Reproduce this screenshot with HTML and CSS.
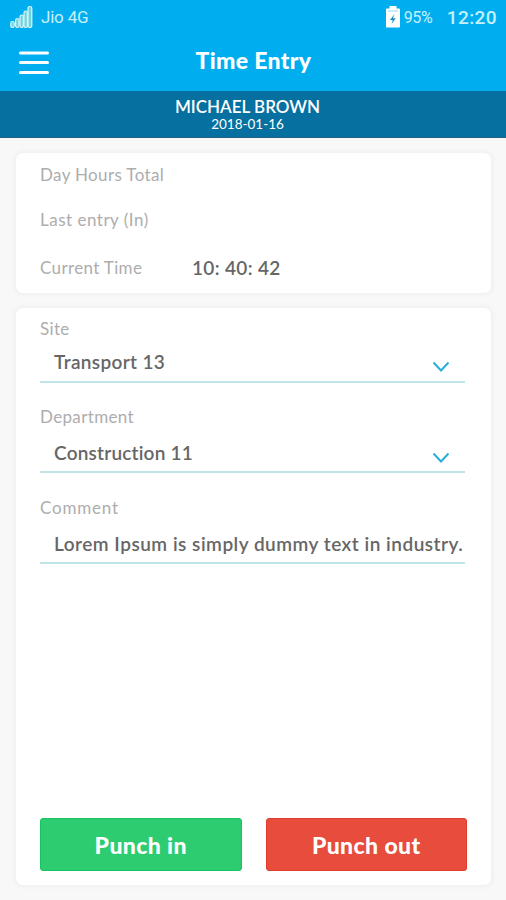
FILE: index.html
```html
<!DOCTYPE html>
<html lang="en">
<head>
<meta charset="utf-8">
<title>Time Entry</title>
<link rel="stylesheet" href="styles.css">
</head>
<body>
<div class="status">
  <svg class="signal" width="23" height="24" viewBox="0 0 23 24"><g fill="#6fd3dd" stroke="#d8f6fa" stroke-width="1.2"><rect x=".8" y="16.500" width="3.400" height="6" rx="1.700"/><rect x="5.600" y="13.500" width="3.400" height="9" rx="1.700"/><rect x="10" y="10" width="3.400" height="12.500" rx="1.700"/><rect x="14" y="6" width="3.400" height="16.500" rx="1.700"/><rect x="18" y="1.500" width="3.800" height="21" rx="1.700"/></g></svg>
  <span class="carrier">Jio 4G</span>
  <svg class="battery" width="16" height="24" viewBox="0 0 16 24"><path fill="#fff" d="M4.500 1h7v2.500H14q1 0 1 1v17q0 1-1 1H2q-1 0-1-1v-17q0-1 1-1h2.500z"/><path d="M3 6h10" stroke="#8bdcf7" stroke-width="1"/><path fill="#168fbe" d="M9.500 9 5 15h2.700L6.700 19l4-5.800H8z"/></svg>
  <span class="percent">95%</span>
  <span class="clock">12:20</span>
</div>
<header class="bar">
  <svg class="menu" width="32" height="26" viewBox="0 0 32 26"><path d="M2.500 3h27M2.500 12.500h27M2.500 22.500h27" stroke="#fff" stroke-width="3" stroke-linecap="round"/></svg>
  <h1 class="title">Time Entry</h1>
</header>
<div class="person">
  <div class="name">MICHAEL BROWN</div>
  <div class="date">2018-01-16</div>
</div>
<main class="content">
  <section class="card summary">
    <div class="row"><span class="label l-day">Day Hours Total</span></div>
    <div class="row"><span class="label l-last">Last entry (In)</span></div>
    <div class="row"><span class="label l-now">Current Time</span><span class="value time">10: 40: 42</span></div>
  </section>
  <section class="card form">
    <div class="field site">
      <div class="label">Site</div>
      <div class="input"><span class="value">Transport 13</span><svg class="chevron" width="18" height="12" viewBox="0 0 18 12"><path d="m1.500 1.500 7.500 8 7.500-8" fill="none" stroke="#27aed8" stroke-width="2"/></svg></div>
    </div>
    <div class="field">
      <div class="label">Department</div>
      <div class="input"><span class="value v-dept">Construction 11</span><svg class="chevron" width="18" height="12" viewBox="0 0 18 12"><path d="m1.500 1.500 7.500 8 7.500-8" fill="none" stroke="#27aed8" stroke-width="2"/></svg></div>
    </div>
    <div class="field">
      <div class="label l-comment">Comment</div>
      <div class="input"><span class="value v-comment">Lorem Ipsum is simply dummy text in industry.</span></div>
    </div>
    <div class="actions">
      <button class="button in">Punch in</button>
      <button class="button out">Punch out</button>
    </div>
  </section>
</main>
</body>
</html>
```
FILE: styles.css
```css
* { box-sizing: border-box; }
body {
  margin: 0;
  height: 900px;
  display: flex;
  flex-direction: column;
  background: #f8f8f8;
  font-family: Lato, "Liberation Sans", sans-serif;
}
.status {
  height: 36px;
  padding: 5px 9px 0 10px;
  display: flex;
  background: #00aeef;
  color: #c5f1fc;
  font-family: Roboto, sans-serif;
  line-height: 25px;
}
.carrier { margin-left: 8px; font-size: 17px; letter-spacing: -.2px; }
.battery { margin-left: auto; }
.percent { width: 30px; margin-left: 3px; font-size: 16px; letter-spacing: -.4px; }
.clock { margin-left: 13px; font-size: 19px; font-weight: 500; letter-spacing: .4px; }
.bar {
  height: 55px;
  padding: 14px 18px 0;
  display: grid;
  grid-template-columns: 32px 1fr 32px;
  background: #00aeef;
}
.title {
  margin: -4px 0 0;
  padding-left: 1px;
  color: #fff;
  text-align: center;
  font-size: 23px;
  line-height: 28px;
  font-weight: 900;
  letter-spacing: .35px;
}
.person {
  height: 47px;
  padding: 6px 11px 0 0;
  text-align: center;
  color: #fff;
  background: #0671a1;
  border-bottom: 1px solid #23627f;
}
.name { font-size: 17px; line-height: 20px; font-weight: 600; }
.date { font-size: 13.5px; line-height: 14px; }
.content {
  flex: 1;
  padding: 15px 15px 15px 16px;
  display: flex;
  flex-direction: column;
  gap: 15px;
}
.card {
  background: #fff;
  border-radius: 7px;
  box-shadow: 0 0 4px 2px #f0f0f0;
}
.summary {
  height: 140px;
  padding: 10px 24px 0;
  display: grid;
  grid-template-rows: 45px 48px 24px;
}
.row { display: flex; align-items: flex-start; line-height: 24px; }
.label { color: #adadad; font-size: 17px; line-height: 24px; letter-spacing: .35px; }
.row .label { width: 152px; }
.row .l-last { letter-spacing: .5px; }
.value { color: #666; font-size: 19px; line-height: 26px; font-weight: 600; letter-spacing: .35px; white-space: nowrap; }
.row .time { line-height: 24px; }
.form {
  flex: 1;
  padding: 9px 24px 14px;
  display: flex;
  flex-direction: column;
}
.field { height: 91px; width: 425px; }
.field.site { height: 88px; }
.l-comment { letter-spacing: .8px; }
.input {
  height: 44px;
  padding: 11px 15px 0 14px;
  display: flex;
  justify-content: space-between;
  border-bottom: 2px solid #bfe4e5;
}
.site .input { height: 42px; padding-top: 8px; }
.chevron { margin-top: 12px; }
.v-dept { letter-spacing: .2px; }
.v-comment { letter-spacing: .5px; }
.actions { margin-top: auto; display: flex; gap: 24px; }
.button {
  width: 202px;
  height: 53px;
  padding: 0;
  border: 1px solid #18c363;
  border-radius: 3px;
  background: #2ecc71;
  color: #fff;
  font: 900 23px/28px Lato, sans-serif;
  letter-spacing: .4px;
}
.out { background: #e74c3c; border-color: #df3c2b; }
```
